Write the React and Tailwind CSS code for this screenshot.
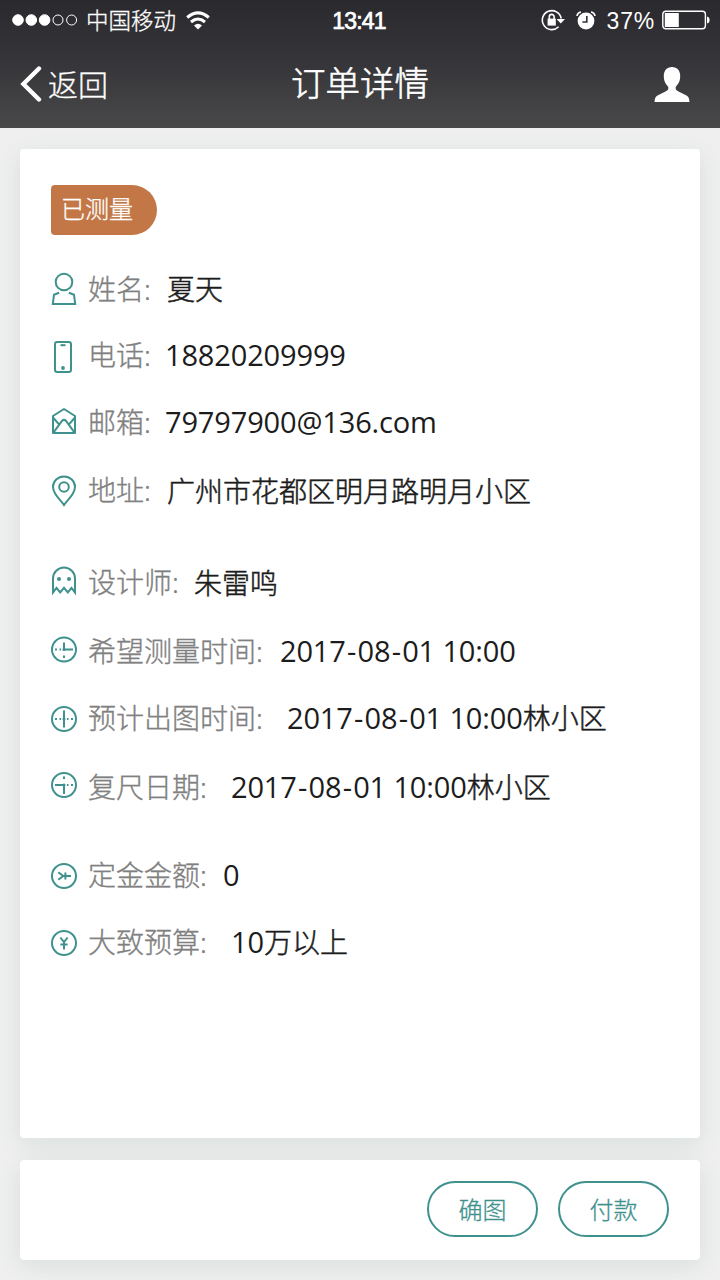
import React from "react";

const CJK = "font-['Noto_Sans_CJK_SC',sans-serif]";
const LATIN = "font-['Open_Sans','Noto_Sans',sans-serif] text-[29px] tracking-[-0.15px]";

const icons = {
  person: (
    <>
      <circle cx="14" cy="10" r="8.3" />
      <path d="M9.2 20.7 L4 22.8 L2.8 32 H25.2 L24 22.8 L18.8 20.7" />
    </>
  ),
  phone: (
    <>
      <rect x="5" y="2" width="16" height="30" rx="2.2" />
      <path d="M10.5 5.2 H15.5" />
      <circle cx="13" cy="28" r="1.9" fill="currentColor" stroke="none" />
    </>
  ),
  mail: (
    <>
      <path d="M3 10 L14 3 L25 10 V27 H3 Z" strokeLinejoin="round" />
      <path d="M3 11.5 L8.8 18.2 M25 11.5 L19.2 18.2 M3.6 26.4 L12 14.8 Q14 13 16 14.8 L24.4 26.4" />
    </>
  ),
  pin: (
    <>
      <path d="M14 32 C12 28.5 3 21.5 3 14 A11 10.5 0 0 1 25 14 C25 21.5 16 28.5 14 32 Z" />
      <circle cx="14" cy="14" r="4.8" />
    </>
  ),
  ghost: (
    <>
      <path d="M3 27.5 V13.5 A11 11 0 0 1 25 13.5 V27.5 L21.5 22.8 L17.8 27.4 L14 22.8 L10.2 27.4 L6.5 22.8 Z" />
      <circle cx="9" cy="14" r="2" fill="currentColor" stroke="none" />
      <circle cx="19" cy="14" r="2" fill="currentColor" stroke="none" />
    </>
  ),
  clockRight: (
    <>
      <circle cx="14" cy="15.5" r="12" />
      <path d="M14 8.5 V15.5 H23" />
      <path d="M5 15.5 H7 M9.5 15.5 H11 M14 21.5 V24" />
      <circle cx="14" cy="15.5" r="1.6" fill="currentColor" stroke="none" />
    </>
  ),
  clockDown: (
    <>
      <circle cx="14" cy="17" r="12" />
      <path d="M14 8.5 V25.5" />
      <path d="M5 17 H7 M9.5 17 H11 M17 17 H18.5 M21 17 H23" />
      <circle cx="14" cy="17" r="1.6" fill="currentColor" stroke="none" />
    </>
  ),
  clockLeft: (
    <>
      <circle cx="14" cy="15" r="12" />
      <path d="M5 15 H14 V24" />
      <path d="M14 6.5 V9 M17 15 H18.5 M21 15 H23" />
      <circle cx="14" cy="15" r="1.6" fill="currentColor" stroke="none" />
    </>
  ),
  deposit: (
    <>
      <circle cx="14" cy="17" r="12" />
      <path d="M8.3 13.3 L13.2 17 L8.3 20.7 M13 17 H21 M15.4 13.4 V20.6" />
    </>
  ),
  budget: (
    <>
      <circle cx="14" cy="16" r="12" />
      <path d="M10.4 10.5 L14 15.2 L17.6 10.5 M14 15 V22.6 M10.4 17.4 H17.6" />
    </>
  ),
};

function RowIcon({ name }) {
  return (
    <svg className="w-7 h-[34px] shrink-0 text-[#3f918e]" viewBox="0 0 28 34" fill="none" stroke="currentColor" strokeWidth="2">
      {icons[name]}
    </svg>
  );
}

const groups = [
  [
    { icon: "person", label: "姓名", cjk: "夏天", h: "h-[68px]", w: "w-[79px]", lift: "pb-[2px]" },
    { icon: "phone", label: "电话", latin: "18820209999", h: "h-[67px]", w: "w-[77px]", lift: "pb-[4px]" },
    { icon: "mail", label: "邮箱", latin: "79797900@136.com", h: "h-[66px]", w: "w-[77px]", lift: "pb-[4px]" },
    { icon: "pin", label: "地址", cjk: "广州市花都区明月路明月小区", h: "h-[68px]", w: "w-[79px]", lift: "pb-[1px]" },
  ],
  [
    { icon: "ghost", label: "设计师", cjk: "朱雷鸣", h: "h-[68px]", w: "w-[106px]", lift: "pb-[1px]" },
    { icon: "clockRight", label: "希望测量时间", latin: "2017-08-01 10:00", h: "h-[69px]", w: "w-[192px]", lift: "pb-0" },
    { icon: "clockDown", label: "预计出图时间", latin: "2017-08-01 10:00", cjk: "林小区", h: "h-[67px]", w: "w-[199px]", lift: "pb-[2px]" },
    { icon: "clockLeft", label: "复尺日期", latin: "2017-08-01 10:00", cjk: "林小区", h: "h-[69px]", w: "w-[143px]", lift: "pb-0" },
  ],
  [
    { icon: "deposit", label: "定金金额", latin: "0", h: "h-[68px]", w: "w-[135px]", lift: "pb-[4px]" },
    { icon: "budget", label: "大致预算", latin: "10", cjk: "万以上", h: "h-[67px]", w: "w-[143px]", lift: "pb-[4px]" },
  ],
];

function Latin({ text }) {
  return (
    <span className={LATIN}>
      {text.split("-").map((part, i) => (
        <React.Fragment key={i}>
          {i > 0 && <span className="px-[1.3px]">-</span>}
          {part}
        </React.Fragment>
      ))}
    </span>
  );
}

function Row({ icon, label, latin, cjk, h, w, lift }) {
  return (
    <div className={"flex items-center text-[28px] leading-[34px] whitespace-nowrap " + h}>
      <RowIcon name={icon} />
      <div className={"flex items-center " + lift}>
        <div className={"ml-[10px] shrink-0 font-light text-[#808080] [-webkit-text-stroke:0.35px_#808080] " + w}>
          {label}
          <span className="font-['Noto_Sans',sans-serif]">:</span>
        </div>
        <div className="text-[#1c1c1c]">
          {latin && <Latin text={latin} />}
          {cjk && <span className="font-light [-webkit-text-stroke:0.5px_#1c1c1c]">{cjk}</span>}
        </div>
      </div>
    </div>
  );
}

function StatusBar() {
  return (
    <div className="grid grid-cols-3 h-10 items-center">
      <div className="flex items-center pl-3">
        <svg className="w-[66px] h-3" viewBox="0 0 66 12" fill="white" stroke="white">
          <circle cx="6" cy="6" r="5.3" />
          <circle cx="19.3" cy="6" r="5.3" />
          <circle cx="32.6" cy="6" r="5.3" />
          <circle cx="46" cy="6" r="5" fill="none" />
          <circle cx="59.6" cy="6" r="5" fill="none" />
        </svg>
        <span className="ml-2 pb-[2px] text-[22.5px] leading-8 font-light whitespace-nowrap [-webkit-text-stroke:0.3px_white]">中国移动</span>
        <svg className="ml-[10px] w-6 h-[19px] shrink-0" viewBox="0 0 24 19" fill="none" stroke="white" strokeWidth="3">
          <path d="M1.2 6.5 Q12 -2.8 22.8 6.5" />
          <path d="M5 11 Q12 5 19 11" />
          <path d="M8 14.6 Q12 11 16 14.6 L12 18.4 Z" fill="white" stroke="none" />
        </svg>
      </div>
      <div className="pr-[2px] pt-[2px] text-center font-['Liberation_Sans',sans-serif] text-[23px] tracking-[-0.8px] [-webkit-text-stroke:0.7px_white]">13:41</div>
      <div className="flex items-center justify-end pr-[10px]">
        <svg className="w-6 h-6" viewBox="0 0 24 24" fill="none" stroke="white" strokeWidth="1.6">
          <path d="M20.2 10.5 A9.5 9.5 0 1 0 17.6 18.8" />
          <path d="M15.6 11 H24 L19.8 15.4 Z" fill="white" stroke="none" />
          <rect x="6.6" y="10.6" width="8.2" height="7" fill="white" stroke="none" />
          <path d="M8.3 11 V8.8 A2.4 2.4 0 0 1 13.1 8.8 V11" />
        </svg>
        <svg className="ml-[11px] w-5 h-5" viewBox="0 0 20 20" fill="none" stroke="white" strokeWidth="1.6">
          <circle cx="10" cy="11" r="8.4" fill="white" stroke="none" />
          <path d="M1 6 Q1.5 2.5 5 2 M19 6 Q18.5 2.5 15 2" />
          <path d="M10.8 6 V12 H6.4" stroke="#302f34" strokeWidth="1.6" />
        </svg>
        <span className="ml-[11px] pt-[2px] font-['Liberation_Sans',sans-serif] text-[23px] leading-8 tracking-[0.8px]">37%</span>
        <svg className="ml-[7px] w-12 h-5 shrink-0" viewBox="0 0 48 20" fill="none" stroke="white" strokeWidth="1.4">
          <rect x="0.8" y="1.2" width="42.6" height="17.6" rx="3" />
          <rect x="2.8" y="3" width="14" height="14" fill="white" stroke="none" />
          <path d="M45 6.5 Q47.6 7 47.6 10 Q47.6 13 45 13.5 Z" fill="white" stroke="none" />
        </svg>
      </div>
    </div>
  );
}

export default function App() {
  return (
    <div className={"flex flex-col w-[720px] h-[1280px] overflow-hidden bg-[#efefef] " + CJK}>
      <header className="h-32 shrink-0 bg-linear-to-b from-[#2a292e] via-[#363539] to-[#49494a] text-white">
        <StatusBar />
        <div className="grid grid-cols-3 h-[88px] items-center pb-1">
          <div className="flex items-center pl-5 pt-1">
            <svg className="w-[22px] h-9" viewBox="0 0 22 36" fill="none" stroke="white" strokeWidth="4.4">
              <path d="M19 2.5 L3.4 18 L19 33.5" strokeLinecap="round" />
            </svg>
            <span className="ml-[6px] pb-[2px] text-[30px] leading-10 font-light [-webkit-text-stroke:0.3px_white]">返回</span>
          </div>
          <h1 className="pb-[2px] text-center text-[34.5px] leading-[44px] font-light [-webkit-text-stroke:0.6px_white]">订单详情</h1>
          <div className="flex justify-end pr-[30px] pt-1">
            <svg className="w-9 h-9" viewBox="0 0 36 36" fill="white">
              <path d="M18 1 C23.3 1 26.2 4.8 26.2 10 C26.2 15.5 24 18.4 21.8 20.8 C21 23.5 22.3 24.6 25 25.8 L32 29.2 Q35.6 31 35.4 36 H0.6 Q0.4 31 4 29.2 L11 25.8 C13.7 24.6 15 23.5 14.2 20.8 C12 18.4 9.8 15.5 9.8 10 C9.8 4.8 12.7 1 18 1 Z" />
            </svg>
          </div>
        </div>
      </header>

      <main className="mx-5 mt-[21px] h-[989px] shrink-0 rounded-[4px] bg-white px-[30px] pt-9 shadow-[0_6px_24px_rgba(50,100,90,0.11)]">
        <div className="ml-px flex h-[50px] w-[106px] items-center rounded-l-[4px] rounded-r-[25px] bg-[#c37746] pl-[10px] pb-1 text-2xl font-light text-white [-webkit-text-stroke:0.3px_white]">
          已测量
        </div>
        <div className="mt-5">
          {groups.map((rows, i) => (
            <section key={i} className={i === 1 ? "mt-6" : i === 2 ? "mt-[21px]" : ""}>
              {rows.map((row) => (
                <Row key={row.label} {...row} />
              ))}
            </section>
          ))}
        </div>
      </main>

      <footer className="mx-5 mt-[22px] flex h-[100px] shrink-0 items-center justify-end gap-5 rounded-[4px] bg-white pr-[31px] pb-[2px] shadow-[0_6px_24px_rgba(50,100,90,0.11)]">
        <button className="h-14 w-[111px] rounded-full border-2 border-[#3f918e] text-2xl font-light text-[#3f918e] [-webkit-text-stroke:0.3px_#3f918e]">确图</button>
        <button className="h-14 w-[111px] rounded-full border-2 border-[#3f918e] text-2xl font-light text-[#3f918e] [-webkit-text-stroke:0.3px_#3f918e]">付款</button>
      </footer>
    </div>
  );
}
